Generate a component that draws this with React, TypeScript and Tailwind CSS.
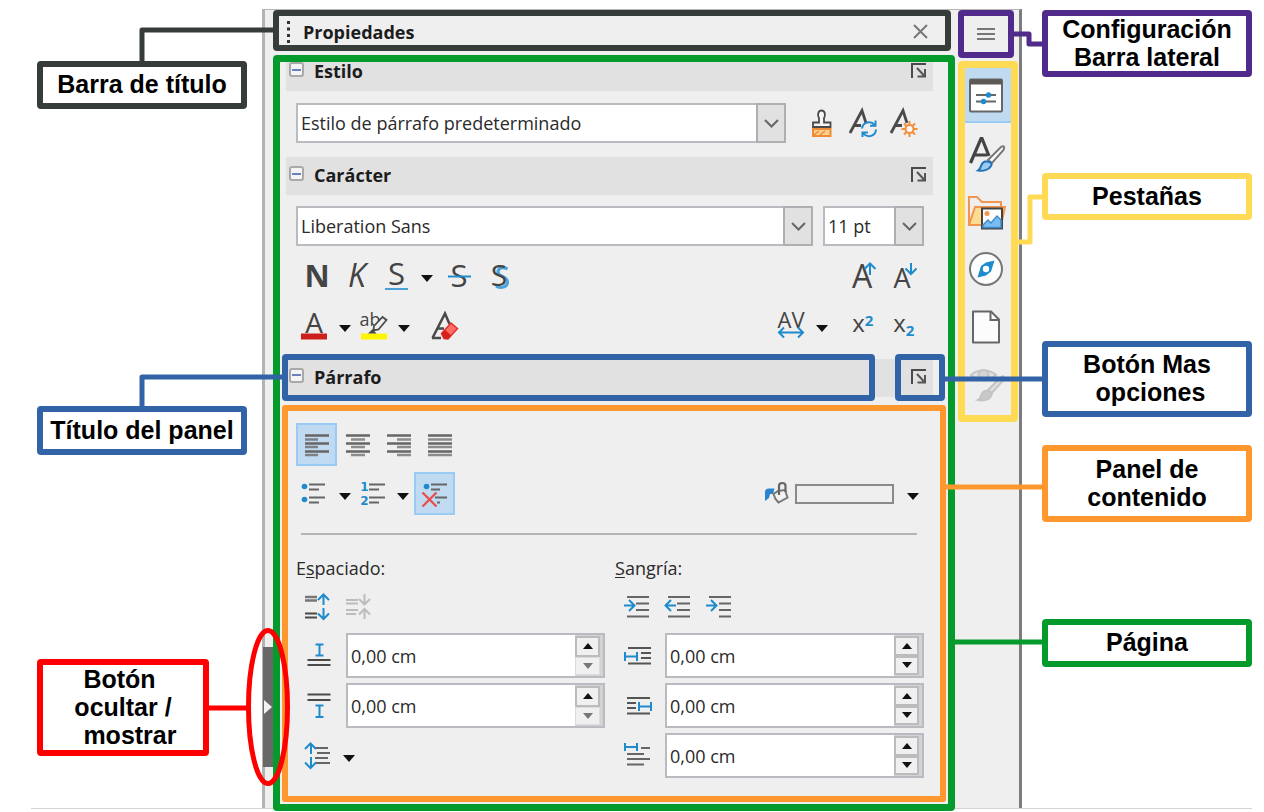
import React from "react";

const DARK = "#4a4a48";
const BLUE = "#1e8bcd";
const UI_FONT = "'Open Sans', 'Noto Sans', sans-serif";

type IconProps = { children: React.ReactNode; w?: number; h?: number };

function Icon({ children, w = 28, h = 28 }: IconProps) {
  return (
    <svg
      width={w}
      height={h}
      viewBox={`0 0 ${w} ${h}`}
      fill="none"
      stroke={DARK}
      strokeWidth={2}
      aria-hidden="true"
      className="shrink-0 overflow-visible"
    >
      {children}
    </svg>
  );
}

type GlyphProps = {
  x: number;
  y: number;
  size: number;
  children: string;
  fill?: string;
  weight?: number;
  italic?: boolean;
  font?: string;
};

function Glyph({ x, y, size, children, fill = "#444", weight = 500, italic = false, font = UI_FONT }: GlyphProps) {
  return (
    <text
      x={x}
      y={y}
      fontSize={size}
      fontFamily={font}
      fontWeight={weight}
      fontStyle={italic ? "italic" : "normal"}
      textAnchor="middle"
      fill={fill}
      stroke="none"
    >
      {children}
    </text>
  );
}

/* ---------- Small building blocks ---------- */

type ToolProps = { label: string; children: React.ReactNode; width?: string; active?: boolean };

function Tool({ label, children, width = "w-[41px]", active = false }: ToolProps) {
  return (
    <button
      type="button"
      aria-label={label}
      title={label}
      className={`flex h-full shrink-0 items-center justify-center ${width} ${
        active ? "border-2 border-[#99cbf5] bg-[#c0dbf1]" : ""
      }`}
    >
      {children}
    </button>
  );
}

function Drop({ label, width = "w-6" }: { label: string; width?: string }) {
  return (
    <button
      type="button"
      aria-label={label}
      className={`flex h-full shrink-0 items-center justify-center pt-1.5 ${width}`}
    >
      <svg width="12" height="7" viewBox="0 0 12 7" aria-hidden="true">
        <path d="M0 0H12L6 7Z" fill="#111" />
      </svg>
    </button>
  );
}

function Combo({ label, value, options, className }: { label: string; value: string; options: string[]; className: string }) {
  return (
    <div className={`relative h-10 ${className}`}>
      <select
        aria-label={label}
        defaultValue={value}
        className="h-full w-full appearance-none rounded-none border-2 border-[#b9bbc1] bg-white pr-8 pl-[3px] text-lg text-[#2a2a2a]"
      >
        {options.map((o) => (
          <option key={o}>{o}</option>
        ))}
      </select>
      <span className="pointer-events-none absolute inset-y-0 right-0 flex w-[30px] items-center justify-center border-2 border-[#adafb3] bg-[#e1e1e1]">
        <svg width="15" height="9" viewBox="0 0 15 9" fill="none" stroke="#666" strokeWidth="2" aria-hidden="true">
          <path d="M1 1L7.500 7.500L14 1" />
        </svg>
      </span>
    </div>
  );
}

function Expander({ label }: { label: string }) {
  return (
    <button
      type="button"
      aria-label={`Contraer ${label}`}
      className="mb-[5px] flex h-[15px] w-[15px] items-center justify-center rounded-[3px] border-2 border-[#a9a9a9] bg-[#f4f4f4]"
    >
      <span className="h-0.5 w-[9px] bg-[#6b83bd]" />
    </button>
  );
}

function MoreOptions({ label }: { label: string }) {
  return (
    <button type="button" aria-label={`Más opciones de ${label}`} className="mb-[3px]">
      <Icon w={15} h={15}>
        <path d="M1 15V1H15" />
        <path d="M6 5L13 12.500M14 6V13.500H6.500" stroke="#555" />
      </Icon>
    </button>
  );
}

function Heading({ title, className }: { title: string; className: string }) {
  return (
    <div className={`mr-[13px] ml-1 flex h-[38px] shrink-0 items-center bg-[#e1e1e1] pr-[7px] pl-[3px] ${className}`}>
      <Expander label={title} />
      <h2 className="flex-1 pb-0.5 pl-[10px] text-lg leading-6 font-bold text-[#1c1c1c]">{title}</h2>
      <MoreOptions label={title} />
    </div>
  );
}

function Spin({ label, icon, lowerDisabled = false }: { label: string; icon: React.ReactNode; lowerDisabled?: boolean }) {
  return (
    <div className="flex h-[45px] items-center">
      <span className="flex w-[50px] shrink-0 justify-center pr-1">{icon}</span>
      <div className="flex h-full min-w-0 flex-1 border-2 border-[#b9bbc1] bg-white">
        <input
          type="text"
          aria-label={label}
          defaultValue="0,00 cm"
          className="w-full min-w-0 flex-1 bg-transparent pl-[3px] text-lg text-[#2a2a2a] outline-none"
        />
        <span className="flex w-[28px] shrink-0 flex-col bg-[#d3d3d6] py-px pr-[3px]">
          <button
            type="button"
            aria-label={`Aumentar ${label}`}
            className="flex flex-1 items-center justify-center border-2 border-[#bcbcbc] bg-[#f0f0f0]"
          >
            <svg width="10" height="6" viewBox="0 0 10 6" aria-hidden="true">
              <path d="M0 6H10L5 0Z" fill="#111" />
            </svg>
          </button>
          <button
            type="button"
            disabled={lowerDisabled}
            aria-label={`Disminuir ${label}`}
            className={`flex flex-1 items-center justify-center bg-[#f0f0f0] ${
              lowerDisabled ? "border border-[#dcdcdc]" : "border-2 border-[#bcbcbc]"
            }`}
          >
            <svg width="10" height="6" viewBox="0 0 10 6" aria-hidden="true">
              <path d="M0 0H10L5 6Z" fill={lowerDisabled ? "#777" : "#111"} />
            </svg>
          </button>
        </span>
      </div>
    </div>
  );
}

/* ---------- Callouts ---------- */

type CalloutProps = {
  text: string;
  frame: string;
  color: string;
  path: string;
  className: string;
};

function Callout({ text, frame, color, path, className }: CalloutProps) {
  return (
    <div className={`relative shrink-0 ${className}`}>
      <svg className="absolute top-0 left-0 h-px w-px overflow-visible" aria-hidden="true">
        <path d={path} fill="none" stroke={color} strokeWidth="5" strokeLinejoin="round" />
      </svg>
      <p
        className={`relative flex h-full items-center justify-center rounded-[4px] border-[6px] bg-white pb-0.5 text-center text-[25px] leading-7 font-bold whitespace-pre text-black ${frame}`}
      >
        {text}
      </p>
    </div>
  );
}

/* ---------- Icons ---------- */

const brushIcon = (
  <Icon>
    <path d="M5 18V13.500H11V9C9.500 7 9.500 1.500 13.500 1.500S17.500 7 16 9V13.500H22.500V18Z" fill="#f5f5f5" strokeWidth="1.800" />
    <path d="M5 20H22.500V27H5Z" fill="#fbcf8e" stroke="#ef8b35" strokeWidth="2" />
    <path d="M6 26L11 22M12 26L17 22" stroke="#ef8b35" strokeWidth="1.500" />
  </Icon>
);
const slantA = <path d="M1 24L13 1.500L17 14M5.500 16.500H12" strokeWidth="2.800" />;
const updateStyleIcon = (
  <Icon>
    {slantA}
    <path d="M13 19.500A7 7 0 0 1 25.500 16M27 20.500A7 7 0 0 1 14.500 24.500M26.500 11.500V16.800H21M13.500 28V23.500H19" stroke={BLUE} />
  </Icon>
);
const newStyleIcon = (
  <Icon>
    {slantA}
    <circle cx="19.500" cy="20" r="4" fill="#f8f8f8" stroke="#f38d3a" />
    <path d="M19.500 12V16M19.500 24V28M11.500 20H15.500M23.500 20H27.500M14 14.500L16.700 17.200M22.300 22.800L25 25.500M14 25.500L16.700 22.800M22.300 17.200L25 14.500" stroke="#f38d3a" />
  </Icon>
);

const boldIcon = (
  <Icon>
    <Glyph x={14} y={25} size={31} weight={700}>N</Glyph>
  </Icon>
);
const italicIcon = (
  <Icon>
    <Glyph x={13} y={25} size={32} italic>K</Glyph>
  </Icon>
);
const underlineIcon = (
  <Icon>
    <Glyph x={13.5} y={22.5} size={31}>S</Glyph>
    <path d="M2 27H25" stroke="#4aa0d6" />
  </Icon>
);
const strikeIcon = (
  <Icon>
    <Glyph x={13} y={25} size={31}>S</Glyph>
    <path d="M2 14.500H25" stroke={BLUE} />
  </Icon>
);
const shadowIcon = (
  <Icon>
    <path
      d="M20.500 7C16 4.500 11 6 11 10C11 15 20.500 14 20.500 20C20.500 25.500 14 26.500 9 24"
      stroke="#4aa5df"
      strokeWidth="3.200"
    />
    <Glyph x={12} y={23.5} size={30}>S</Glyph>
  </Icon>
);
const growIcon = (
  <Icon>
    <Glyph x={11} y={26} size={32}>A</Glyph>
    <path d="M19 13V2M13.500 7L19 1.500L24.500 7" stroke={BLUE} />
  </Icon>
);
const shrinkIcon = (
  <Icon>
    <Glyph x={10} y={26} size={27}>A</Glyph>
    <path d="M19 1V12M13.500 6.500L19 12L24.500 6.500" stroke={BLUE} />
  </Icon>
);
const fontColorIcon = (
  <Icon>
    <Glyph x={13} y={20.5} size={28}>A</Glyph>
    <path d="M0 24.500H26" stroke="#cd1f1b" strokeWidth="6" />
  </Icon>
);
const highlightIcon = (
  <Icon>
    <path d="M0 24.500H26" stroke="#fdf500" strokeWidth="6" />
    <Glyph x={9} y={14} size={18}>ab</Glyph>
    <path d="M13 14L21.500 5L25.500 8L17.500 17.500L12.500 18.500Z" fill="#f0f0f0" strokeWidth="1.800" />
    <path d="M7 21.500L11.500 17L15.500 21.500Z" fill={DARK} stroke="none" />
  </Icon>
);
const clearIcon = (
  <Icon>
    <path d="M1.500 26L14 1.500L18.500 12M6.500 16.500H13M1 26H10" strokeWidth="2.600" />
    <path d="M10.500 21.500L20 11L26.500 16.500L17 27L13 26.500Z" fill="#ff6d67" stroke="#e0332d" strokeWidth="1.500" />
    <path d="M10.500 21.500L14 17.800L20.300 23.500L17 27L13 26.500Z" fill="#d8211b" stroke="none" />
  </Icon>
);
const spacingIcon = (
  <Icon>
    <Glyph x={13} y={16} size={22}>AV</Glyph>
    <path d="M1 20.500H25M6 15.500L1 20.500L6 25.500M20 15.500L25 20.500L20 25.500" stroke={BLUE} />
  </Icon>
);
const superIcon = (
  <Icon>
    <Glyph x={7.5} y={20} size={24} weight={500}>x</Glyph>
    <Glyph x={18} y={14} size={15} weight={700} fill={BLUE}>2</Glyph>
  </Icon>
);
const subIcon = (
  <Icon>
    <Glyph x={7.5} y={20} size={24} weight={500}>x</Glyph>
    <Glyph x={18} y={23.5} size={15} weight={700} fill={BLUE}>2</Glyph>
  </Icon>
);

const longRows = <path d="M2 4.500H26M2 12.500H26M2 20.500H26" stroke="#666" strokeWidth="2.400" />;
const alignLeft = (
  <Icon>
    {longRows}
    <path d="M2 8.500H15M2 16H15M2 24H15" stroke="#7d8186" strokeWidth="2.400" />
  </Icon>
);
const alignCenter = (
  <Icon>
    {longRows}
    <path d="M7 8.500H21M7 16H21M7 24H21" stroke="#8c8c8c" strokeWidth="2.400" />
  </Icon>
);
const alignRight = (
  <Icon>
    {longRows}
    <path d="M12 8.500H26M12 16H26M12 24H26" stroke="#8c8c8c" strokeWidth="2.400" />
  </Icon>
);
const alignJustify = (
  <Icon>
    {longRows}
    <path d="M2 8.500H26M2 16H26M2 24H26" stroke="#8c8c8c" strokeWidth="2.400" />
  </Icon>
);

const bulletsIcon = (
  <Icon>
    <circle cx="3.500" cy="6.500" r="2.800" fill={BLUE} stroke="none" />
    <circle cx="3.500" cy="19.500" r="2.800" fill={BLUE} stroke="none" />
    <path d="M8 4.500H24M8 9.500H18M8 17.500H24M8 22.500H18" stroke="#666" />
  </Icon>
);
const numbersIcon = (
  <Icon>
    <Glyph x={3.5} y={10.5} size={12} weight={700} fill={BLUE} font="'DejaVu Sans', sans-serif">1</Glyph>
    <Glyph x={3.5} y={25} size={12} weight={700} fill={BLUE} font="'DejaVu Sans', sans-serif">2</Glyph>
    <path d="M8 4.500H24M8 9.500H18M8 17.500H24M8 22.500H18" stroke="#666" />
  </Icon>
);
const noListIcon = (
  <Icon>
    <circle cx="5.500" cy="6.500" r="2.800" fill={BLUE} stroke="none" />
    <path d="M10 4.500H26M10 9.500H19M14 17.500H26M16 22.500H19" stroke="#666" />
    <path d="M1.500 12.500L15.500 26.500M15.500 12.500L1.500 26.500" stroke="#e8504c" strokeWidth="2.400" />
  </Icon>
);
const bucketIcon = (
  <Icon w={24} h={24}>
    <path d="M1 19V10Q1 6.500 5 6.500H10.500L9 12H6L5 16Z" fill="#2a84cf" stroke="none" />
    <path d="M9.500 12L14 9L21 8L23.500 15.500L14.500 20.500L11.500 17Z" fill="#f3f3f3" stroke="#777" />
    <path d="M15 13V4C15 0 21.500 0 21.500 4V10" stroke="#666" strokeWidth="2.200" />
  </Icon>
);

const raiseSpacing = (
  <Icon>
    <path d="M2 4H14M2 7.500H14" stroke="#777" strokeWidth="2.400" />
    <path d="M2 20.500H14M2 24.500H14" />
    <path d="M20.500 12V1.500M15 7L20.500 1.500L26 7M20.500 15V26M15 20.500L20.500 26L26 20.500" stroke={BLUE} />
  </Icon>
);
const lowerSpacing = (
  <Icon>
    <path d="M2 7H14M2 10.500H14M2 17H14M2 21H12M20.500 1V11.500M15 6L20.500 11.500L26 6M20.500 26V16M15 21.500L20.500 16L26 21.500" stroke="#bcbcbc" />
  </Icon>
);
const indentMore = (
  <Icon>
    <path d="M5 4H27M14 10.500H27M14 17H27M5 23.500H27" stroke="#666" />
    <path d="M2 12.500H12M7 7L12.500 12.500L7 18" stroke={BLUE} />
  </Icon>
);
const indentLess = (
  <Icon>
    <path d="M5 4H27M14 10.500H27M14 17H27M5 23.500H27" stroke="#666" />
    <path d="M2.500 12.500H13M8 7L2.500 12.500L8 18" stroke={BLUE} />
  </Icon>
);
const indentHanging = (
  <Icon>
    <path d="M5 4H27M15 10.500H27M15 17H27M15 23.500H27" stroke="#666" />
    <path d="M2 12.500H12M7 7L12.500 12.500L7 18" stroke={BLUE} />
  </Icon>
);
const aboveIcon = (
  <Icon>
    <path d="M10.500 2.500H18.500M14.500 2.500V13M10.500 13.500H18.500" stroke={BLUE} />
    <path d="M2.500 18H25.500M2.500 23H25.500" />
  </Icon>
);
const belowIcon = (
  <Icon>
    <path d="M2.500 2.500H25.500M2.500 8H25.500" />
    <path d="M10.500 13.500H18.500M14.500 14V25M10.500 25H18.500" stroke={BLUE} />
  </Icon>
);
const beforeIcon = (
  <Icon>
    <path d="M4 6H27M17 11H27M17 16H27M4 21.500H27" stroke="#555" />
    <path d="M1 10V19M1 14.500H13M13 10V19" stroke={BLUE} />
  </Icon>
);
const afterIcon = (
  <Icon>
    <path d="M3 6H26M3 11H12M3 16H12M3 21.500H26" stroke="#555" />
    <path d="M15 10V19M15 14.500H27M27 10V19" stroke={BLUE} />
  </Icon>
);
const firstLineIcon = (
  <Icon>
    <path d="M17 6H26M3 12H20M3 17H26M3 22.500H20" stroke="#666" />
    <path d="M1 1V9M1 5H13M13 1V9" stroke={BLUE} />
  </Icon>
);
const lineSpacingIcon = (
  <Icon>
    <path d="M12 6H25M14 11H27M12 16H25M12 21H27" stroke="#666" />
    <path d="M8 12V1.500M2 7L7.500 1.500L13 7M8 15V26M2 20.500L7.500 26L13 20.500" stroke={BLUE} />
  </Icon>
);

const propertiesTab = (
  <Icon w={36} h={36}>
    <rect x="2" y="2.500" width="32" height="32" rx="1" fill="#fff" stroke="#666" />
    <path d="M2 5H34" stroke="#5d5a56" strokeWidth="5" />
    <path d="M8 18H28M8 24.500H28" stroke="#666" />
    <circle cx="20.500" cy="18" r="2.700" fill={BLUE} stroke="none" />
    <circle cx="15.500" cy="24.500" r="2.700" fill={BLUE} stroke="none" />
  </Icon>
);
const stylesTab = (
  <Icon w={36} h={36}>
    <path d="M2.500 27L13 2.500H14L21 20M6 19H19" stroke="#444" strokeWidth="3.200" />
    <path d="M20 24L33 11C36 9 37 11 35.500 14L24 27Z" fill="#fafafa" stroke="#777" strokeWidth="2" />
    <path d="M10 34.500C14 32 12 27 17 25.500C21 25 25 27 23 30C21 34 15 35.500 10 34.500Z" fill="#9bcbf0" stroke="#2173b8" />
  </Icon>
);
const galleryTab = (
  <Icon w={36} h={36}>
    <path d="M1 31V3H9L14 8H33V12" stroke="#f2954f" />
    <path d="M1 31L7 13H37L33 31Z" fill="#fbdc91" stroke="#f2954f" />
    <rect x="14" y="14.500" width="20" height="20" fill="#fdfdfd" stroke="#444" />
    <circle cx="19" cy="19.500" r="2.500" fill="#f2954f" stroke="none" />
    <path d="M15 31L20 26L23 29L29 22L33 26V33.500H15Z" fill="#7cbdf1" stroke="#3d8dcc" strokeWidth="1.500" />
  </Icon>
);
const navigatorTab = (
  <Icon w={36} h={36}>
    <circle cx="18" cy="17" r="16" fill="#fdfdfd" stroke="#777" />
    <path d="M9.500 25.500L13 14L18 10.500L26.500 8.500L23 19.500L18 23.500Z" fill={BLUE} stroke="none" />
    <circle cx="18" cy="17" r="3.200" fill="#fff" stroke="none" />
  </Icon>
);
const pageTab = (
  <Icon w={36} h={36}>
    <path d="M5 1.500H23L31 9.500V32.500H5Z" fill="#fcfcfc" stroke="#666" strokeLinejoin="round" />
    <path d="M22.500 1.500V10H31" stroke="#666" />
  </Icon>
);
const inspectorTab = (
  <Icon w={36} h={36}>
    <g stroke="#c4c4c4">
      <path d="M3 7C9 1 22 1 28 7C22 14 9 14 3 7Z" fill="#e2e2e2" />
      <circle cx="15.500" cy="7" r="5" fill="#d5d5d5" />
      <path d="M20 22L33 9C36 7 37 9 35.500 12L24 25Z" fill="#dedede" />
      <path d="M10 32C14 30 12 25 17 23C21 22 25 25 23 28C21 32 15 33 10 32Z" fill="#c9c9c9" />
    </g>
  </Icon>
);

const tabs = [
  { label: "Propiedades", icon: propertiesTab, active: true },
  { label: "Estilos", icon: stylesTab, active: false },
  { label: "Galería", icon: galleryTab, active: false },
  { label: "Navegador", icon: navigatorTab, active: false },
  { label: "Diseño de página", icon: pageTab, active: false },
  { label: "Inspector de estilo", icon: inspectorTab, active: false },
];

/* ---------- Sidebar panels ---------- */

function StylePanel() {
  return (
    <section>
      <Heading title="Estilo" className="-mt-[9px]" />
      <div className="mt-3 flex h-10 items-center pr-[22px] pl-[14px]">
        <Combo
          label="Estilo de párrafo"
          value="Estilo de párrafo predeterminado"
          options={["Estilo de párrafo predeterminado", "Cuerpo de texto", "Título 1"]}
          className="mr-[15px] flex-1"
        />
        <Tool label="Clonar formato">{brushIcon}</Tool>
        <Tool label="Actualizar estilo">{updateStyleIcon}</Tool>
        <Tool label="Estilo nuevo">{newStyleIcon}</Tool>
      </div>
    </section>
  );
}

function CharacterPanel() {
  return (
    <section>
      <Heading title="Carácter" className="mt-[14px]" />
      <div className="mt-[11px] flex gap-[10px] pr-[22px] pl-[14px]">
        <Combo label="Tipo de letra" value="Liberation Sans" options={["Liberation Sans", "Liberation Serif"]} className="flex-1" />
        <Combo label="Tamaño" value="11 pt" options={["10 pt", "11 pt", "12 pt"]} className="w-[101px]" />
      </div>
      <div className="mt-[9px] flex h-[41px] items-center pr-[20px] pl-[14px]">
        <Tool label="Negrita">{boldIcon}</Tool>
        <Tool label="Cursiva">{italicIcon}</Tool>
        <Tool label="Subrayado" width="w-[37px]">{underlineIcon}</Tool>
        <Drop label="Opciones de subrayado" />
        <Tool label="Tachado">{strikeIcon}</Tool>
        <Tool label="Sombra">{shadowIcon}</Tool>
        <span className="flex-1" />
        <Tool label="Aumentar tamaño">{growIcon}</Tool>
        <Tool label="Reducir tamaño">{shrinkIcon}</Tool>
      </div>
      <div className="mt-[9px] flex h-[41px] items-center pr-[20px] pl-[14px]">
        <Tool label="Color de letra" width="w-[37px]">{fontColorIcon}</Tool>
        <Drop label="Elegir color de letra" />
        <Tool label="Resaltado" width="w-[35px]">{highlightIcon}</Tool>
        <Drop label="Elegir color de resaltado" />
        <span className="w-2" />
        <Tool label="Limpiar formato">{clearIcon}</Tool>
        <span className="flex-1" />
        <Tool label="Espaciado entre caracteres" width="w-[37px]">{spacingIcon}</Tool>
        <Drop label="Opciones de espaciado" />
        <span className="w-[10px]" />
        <Tool label="Superíndice">{superIcon}</Tool>
        <Tool label="Subíndice">{subIcon}</Tool>
      </div>
    </section>
  );
}

function ParagraphPanel() {
  return (
    <section>
      <div className="mt-2 flex h-[47px] items-center">
        <div className="flex h-full flex-1 items-center rounded-[4px] border-[6px] border-[#3263a6] bg-[#e1e1e1] pl-px">
          <Expander label="Párrafo" />
          <h2 className="flex-1 pb-0.5 pl-[10px] text-lg leading-6 font-bold text-[#1c1c1c]">Párrafo</h2>
        </div>
        <div className="h-[38px] w-5 bg-[#e1e1e1]" />
        <div className="flex h-full w-[50px] rounded-[4px] border-[6px] border-[#3263a6]">
          <div className="flex w-8 items-center bg-[#e1e1e1] pl-[10px]">
            <MoreOptions label="Párrafo" />
          </div>
        </div>
        <div className="w-px" />
      </div>

      <div className="mt-1 rounded-[3px] border-[6px] border-[#ff972f] pt-3 pr-4 pb-[18px] pl-2">
        <div className="flex h-[43px]">
          <Tool label="Alinear a la izquierda" active>{alignLeft}</Tool>
          <Tool label="Centrar">{alignCenter}</Tool>
          <Tool label="Alinear a la derecha">{alignRight}</Tool>
          <Tool label="Justificar">{alignJustify}</Tool>
        </div>
        <div className="mt-1.5 flex h-[43px] items-center">
          <Tool label="Viñetas" width="w-[37px]">{bulletsIcon}</Tool>
          <Drop label="Opciones de viñetas" />
          <Tool label="Numeración" width="w-[35px]">{numbersIcon}</Tool>
          <Drop label="Opciones de numeración" width="w-[22px]" />
          <Tool label="Sin lista" active>{noListIcon}</Tool>
          <span className="flex-1" />
          <button type="button" aria-label="Color de fondo" className="flex items-center gap-[7px]">
            {bucketIcon}
            <span className="h-5 w-[99px] border-2 border-[#8a8a8a]" />
          </button>
          <span className="w-2" />
          <Drop label="Elegir color de fondo" width="w-[22px]" />
        </div>
        <hr className="mt-[18px] mr-[7px] ml-[5px] border-t-2 border-[#b4b4b4]" />

        <div className="mt-[21px] grid grid-cols-2 gap-[10px]">
          <div>
            <h3 className="text-lg leading-6 text-[#2a2a2a]">
              E<span className="underline underline-offset-2">s</span>paciado:
            </h3>
            <div className="mt-1.5 mb-1.5 flex h-[41px]">
              <Tool label="Aumentar espaciado">{raiseSpacing}</Tool>
              <Tool label="Reducir espaciado">{lowerSpacing}</Tool>
            </div>
            <div className="flex flex-col gap-[5px]">
              <Spin label="Espaciado sobre el párrafo" icon={aboveIcon} lowerDisabled />
              <Spin label="Espaciado bajo el párrafo" icon={belowIcon} lowerDisabled />
              <div className="flex h-[45px] items-center">
                <Tool label="Interlineado">{lineSpacingIcon}</Tool>
                <Drop label="Opciones de interlineado" />
              </div>
            </div>
          </div>
          <div>
            <h3 className="text-lg leading-6 text-[#2a2a2a]">
              <span className="underline underline-offset-2">S</span>angría:
            </h3>
            <div className="mt-1.5 mb-1.5 flex h-[41px]">
              <Tool label="Aumentar sangría">{indentMore}</Tool>
              <Tool label="Reducir sangría">{indentLess}</Tool>
              <Tool label="Sangría francesa">{indentHanging}</Tool>
            </div>
            <div className="flex flex-col gap-[5px]">
              <Spin label="Sangría antes del texto" icon={beforeIcon} />
              <Spin label="Sangría después del texto" icon={afterIcon} />
              <Spin label="Sangría de primera línea" icon={firstLineIcon} />
            </div>
          </div>
        </div>
      </div>
    </section>
  );
}

function Sidebar() {
  return (
    <div className="mt-[9px] flex min-w-[700px] flex-1 border-t border-r-[3px] border-l-[3px] border-t-[#b5b5b5] border-r-[#7c7c7c] border-l-[#b3b3b3] bg-[#efefef] font-['Open_Sans','Noto_Sans',sans-serif]">
      <div className="relative z-20 w-2 shrink-0">
        <div className="h-[637px]" />
        <button
          type="button"
          aria-label="Ocultar o mostrar"
          className="relative -ml-0.5 flex h-[120px] w-[10px] items-center justify-center bg-[#686868]"
        >
          <svg width="8" height="14" viewBox="0 0 8 14" aria-hidden="true">
            <path d="M0 0L8 7L0 14Z" fill="#f2f2f2" />
          </svg>
          <svg
            className="pointer-events-none absolute -top-[19px] -left-[17px]"
            width="44"
            height="158"
            viewBox="0 0 44 158"
            fill="none"
            aria-hidden="true"
          >
            <ellipse cx="22" cy="79" rx="19.500" ry="76.500" stroke="#fe0000" strokeWidth="5" />
          </svg>
        </button>
      </div>

      <div className="relative z-10 -mb-[3px] flex min-w-0 flex-1 flex-col">
        <header className="mr-1 flex h-[41px] items-center rounded-[4px] border-[6px] border-[#363c3a] pr-[17px] pl-2">
          <svg width="4" height="24" viewBox="0 0 4 24" aria-hidden="true">
            <path d="M0 2H3V5H0ZM0 8.500H3V11.500H0ZM0 15H3V18H0ZM0 21H3V24H0Z" fill="#333" />
          </svg>
          <h1 className="flex-1 pt-[3px] pl-3 text-lg leading-6 font-bold text-[#1c1c1c]">Propiedades</h1>
          <button type="button" aria-label="Cerrar" className="pt-0.5">
            <Icon w={15} h={15}>
              <path d="M1 1L14 14M14 1L1 14" stroke="#777" />
            </Icon>
          </button>
        </header>
        <div className="mt-1 overflow-hidden rounded-[4px] border-[7px] border-[#049a2c] px-0.5 pb-0.5">
          <StylePanel />
          <CharacterPanel />
          <ParagraphPanel />
        </div>
      </div>

      <div className="ml-[3px] w-[61px] shrink-0">
        <button
          type="button"
          aria-label="Configuración de la barra lateral"
          className="flex h-[48px] w-[56px] items-center justify-center rounded-[4px] border-[6px] border-[#512b8b]"
        >
          <Icon w={18} h={14}>
            <path d="M0 2H18M0 7H18M0 12H18" stroke="#777" />
          </Icon>
        </button>
        <nav aria-label="Pestañas" className="mt-[3px] h-[361px] w-[60px] rounded-[4px] border-[7px] border-[#ffdb55]">
          {tabs.map((t) => (
            <button
              key={t.label}
              type="button"
              aria-label={t.label}
              className={`mb-[3px] flex h-[55px] w-full items-center pl-[3px] ${
                t.active ? "border-b-2 border-[#99cbf5] bg-[#c0dbf1]" : ""
              }`}
            >
              {t.icon}
            </button>
          ))}
        </nav>
      </div>
    </div>
  );
}

export default function App() {
  return (
    <main className="min-h-screen overflow-hidden bg-white font-['Liberation_Sans',Arial,sans-serif]">
      <div className="flex">
        <div className="relative z-30 flex w-[262px] shrink-0 flex-col pl-[37px]">
          <Callout text="Barra de título" color="#363c3a" frame="border-[#363c3a]" path="M105 2V-31H238" className="mt-[61px] h-[48px] w-[210px]" />
          <Callout text="Título del panel" color="#3263a6" frame="border-[#3263a6]" path="M105 2V-29H246" className="mt-[297px] h-[49px] w-[210px]" />
          <Callout text={"Botón \nocultar /\n  mostrar"} color="#fe0000" frame="border-[#fe0000]" path="M170 49H211" className="mt-[204px] h-[97px] w-[172px]" />
        </div>

        <Sidebar />

        <div className="relative z-30 flex w-[242px] shrink-0 flex-col pr-3 pl-5">
          <Callout text={"Configuración\nBarra lateral"} color="#512b8b" frame="border-[#512b8b]" path="M-28 24H-13V34H2" className="mt-[10px] h-[67px]" />
          <Callout text="Pestañas" color="#ffdb55" frame="border-[#ffdb55]" path="M-26 69H-12V24H2" className="mt-[96px] h-[47px]" />
          <Callout text={"Botón Mas\n opciones"} color="#3263a6" frame="border-[#3263a6]" path="M-98 38H2" className="mt-[121px] h-[76px]" />
          <Callout text={"Panel de\ncontenido"} color="#ff972f" frame="border-[#ff972f]" path="M-97 42H2" className="mt-[28px] h-[77px]" />
          <Callout text="Página" color="#049a2c" frame="border-[#049a2c]" path="M-88 23H2" className="mt-[97px] h-[48px]" />
        </div>
      </div>
      <hr className="mr-3 ml-[31px] border-[#d4d4d4]" />
    </main>
  );
}
